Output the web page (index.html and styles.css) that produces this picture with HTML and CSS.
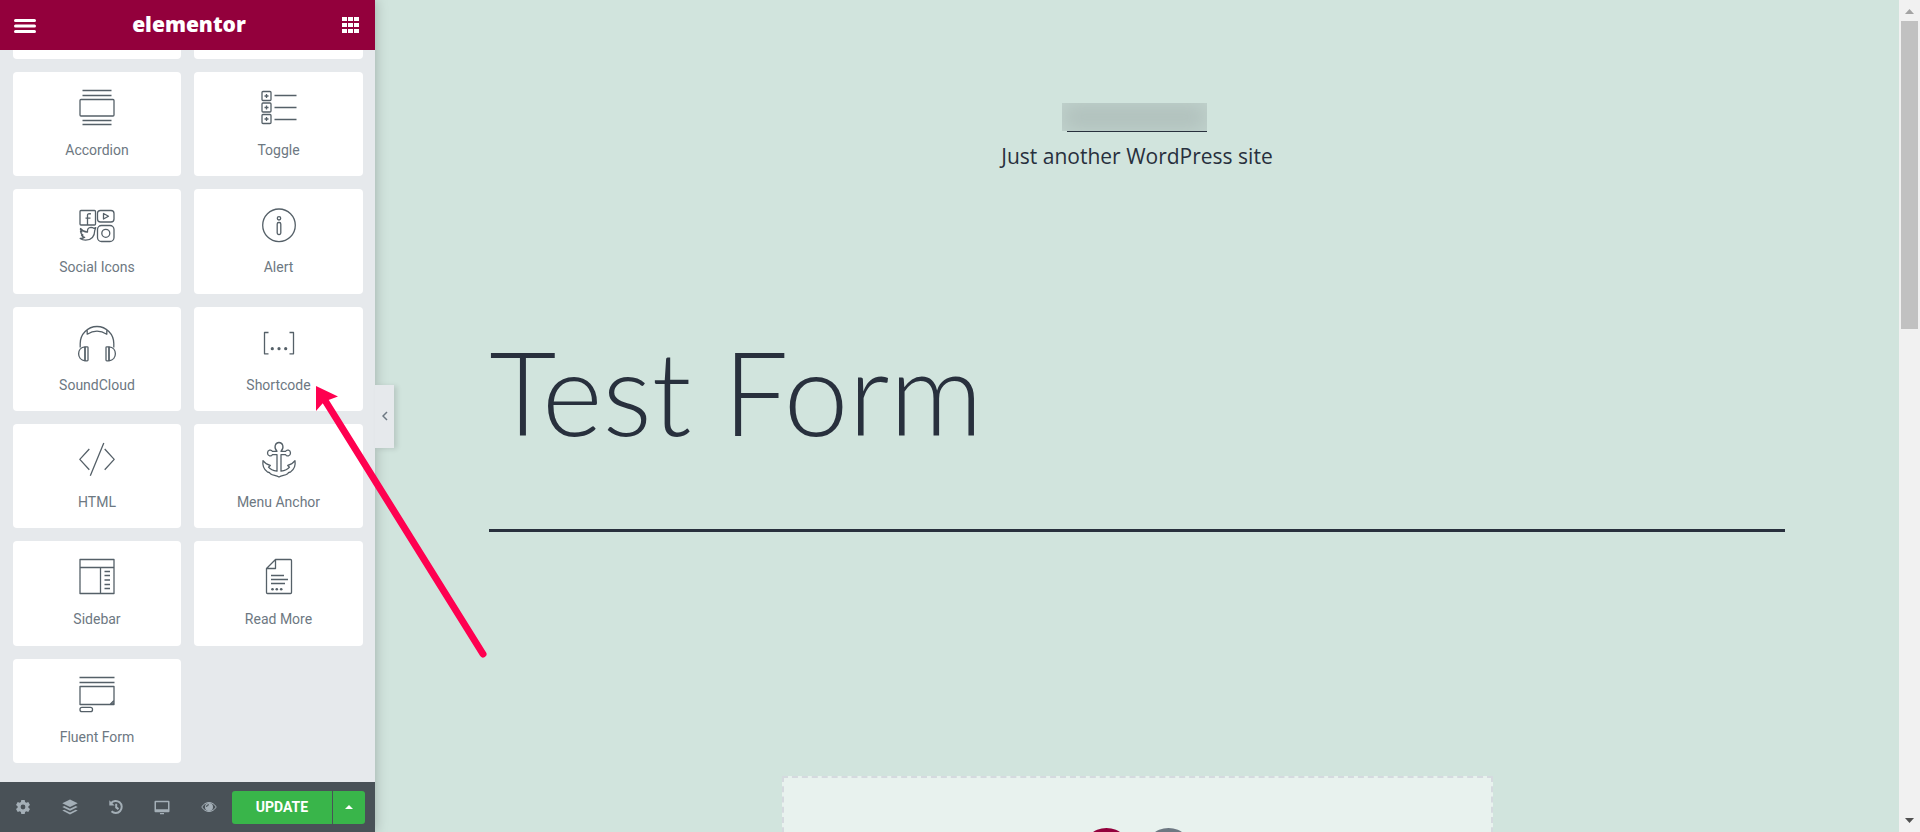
FILE: index.html
```html
<!DOCTYPE html>
<html lang="en">
<head>
<meta charset="utf-8">
<meta name="viewport" content="width=device-width, initial-scale=1">
<title>Elementor | Test Form</title>
<link rel="stylesheet" href="styles.css">
</head>
<body>
<div class="editor">
  <aside class="panel">
    <header class="panel-header">
      <button class="header-btn" type="button" aria-label="Menu">
        <svg width="22" height="18" viewBox="0 0 22 18"><path d="M1.500 4.500h19M1.500 10h19M1.500 15.500h19" stroke="#fff" stroke-width="3" stroke-linecap="round"/></svg>
      </button>
      <span class="logo">elementor</span>
      <button class="header-btn" type="button" aria-label="Widgets panel">
        <svg width="17" height="17" viewBox="0 0 17 17" fill="#fff"><path d="M0 0h5v4H0zM6 0h5v4H6zM12 0h5v4h-5zM0 6h5v4H0zM6 6h5v4H6zM12 6h5v4h-5zM0 12h5v4H0zM6 12h5v4H6zM12 12h5v4h-5z"/></svg>
      </button>
    </header>

    <div class="widgets">
      <div class="widget-edge"></div>
      <div class="widget-edge"></div>
      <button class="widget" type="button">
        <svg class="icon" viewBox="0 0 40 40"><path d="M5.500 2.500h29M5.500 7.500h29M5.500 32.500h29M5.500 36.500h29"/><rect x="3" y="11.500" width="34" height="16.500" rx="1"/></svg>
        <span>Accordion</span>
      </button>
      <button class="widget" type="button">
        <svg class="icon" viewBox="0 0 40 40"><rect x="3" y="3.500" width="9" height="9" rx="1"/><rect x="3" y="15" width="9" height="9" rx="1"/><rect x="3" y="26.500" width="9" height="9" rx="1"/><path d="M7.500 6v4M5.500 8h4M7.500 17.500v4M5.500 19.500h4M7.500 29v4M5.500 31h4M15.500 7.500h22M15.500 19.500h22M15.500 31.500h22"/></svg>
        <span>Toggle</span>
      </button>
      <button class="widget" type="button">
        <svg class="icon" viewBox="0 0 40 40"><rect x="3" y="5.500" width="15.500" height="14.500" rx="1"/><path d="M10.500 20v-10q0-1.500 3.500-1.200M8.500 13.200h5"/><rect x="20.500" y="5.500" width="16.500" height="11.500" rx="3"/><path d="M26.500 8.500v5.500l5-2.800z"/><rect x="20.500" y="20.500" width="16.500" height="16" rx="4"/><circle cx="28.800" cy="28.300" r="4"/><path d="M3.500 23.500q3 3.800 7 3.500q-.5-4.500 3.500-4.700q1.600 0 2.800 1l2-.7-1 2.600q-.3 9.800-9.300 10q-3 0-5.300-1.700 2.800.2 4.500-1.200-2.500-.3-3.200-2.300h1.500q-2.300-1.200-2.500-3.500l1.300.3q-2-1.500-1.300-3.300z"/></svg>
        <span>Social Icons</span>
      </button>
      <button class="widget" type="button">
        <svg class="icon" viewBox="0 0 40 40"><circle cx="20" cy="20.300" r="16.300"/><circle cx="20" cy="13.300" r="1.700"/><rect x="18.200" y="17.500" width="3.600" height="12" rx="1.500"/></svg>
        <span>Alert</span>
      </button>
      <button class="widget" type="button">
        <svg class="icon" viewBox="0 0 40 40"><path d="M3.200 24.500v-4a16.800 17 0 0 1 33.600 0v4M10.200 6.700v4.500q9.800-6 19.600 0V6.700M8 23.800v14C-.500 37 -.500 24.500 8 23.800zM32 23.800v14c8.500-.8 8.500-13.300 0-14z"/><rect x="8" y="23.800" width="3" height="14" rx=".8"/><rect x="29" y="23.800" width="3" height="14" rx=".8"/></svg>
        <span>SoundCloud</span>
      </button>
      <button class="widget" type="button">
        <svg class="icon" viewBox="0 0 40 40"><path d="M9.500 9.500h-4v21.300h4M30.500 9.500h4v21.300h-4"/><g class="dots"><circle cx="13.300" cy="25.700" r="1.600"/><circle cx="20" cy="25.700" r="1.600"/><circle cx="26.700" cy="25.700" r="1.600"/></g></svg>
        <span>Shortcode</span>
      </button>
      <button class="widget" type="button">
        <svg class="icon" viewBox="0 0 40 40"><path d="M12.300 9l-9.500 10.400 9.500 10.400M27.700 9l9.500 10.400-9.500 10.400M26.800 3L13.300 35.800"/></svg>
        <span>HTML</span>
      </button>
      <button class="widget" type="button">
        <svg class="icon" viewBox="0 0 40 40"><path d="M18 11.300C14.500 8 16 2.500 20 2.500s5.500 5.500 2 8.800h4.700c1-2 4.800-1.500 4.800 1.700s-3.800 3.700-4.800 1.700H22v16.500c3.500-.5 6.500-1.500 8.500-4l-1.800-1.700q4.500-1 7.300-4.800c.8 5.500-1.500 9.300-4.500 11.300q-2.200.3-3.200 2C26 35.500 23 35.300 20 37c-3-1.700-6-1.500-8.300-3q-1-1.700-3.200-2C5.500 30 3.200 26.200 4 20.700q2.800 3.800 7.300 4.800l-1.800 1.700c2 2.500 5 3.500 8.500 4V14.700h-4.700c-1 2-4.800 1.500-4.800-1.700s3.800-3.700 4.800-1.700z"/></svg>
        <span>Menu Anchor</span>
      </button>
      <button class="widget" type="button">
        <svg class="icon" viewBox="0 0 40 40"><path d="M3 2.500h34v34H3zM3 10.500h34M23.500 10.500v26M27.500 14.500h5.500M27.500 18.500h5.500M27.500 23h5.500M27.500 27.500h5.500M27.500 31.500h5.500"/></svg>
        <span>Sidebar</span>
      </button>
      <button class="widget" type="button">
        <svg class="icon" viewBox="0 0 40 40"><path d="M16.500 2.500H31.500a1 1 0 0 1 1 1v32a1 1 0 0 1-1 1h-23a1 1 0 0 1-1-1V11.500zv9h-9M12 18.500h13M12 22.500h17M12 26.500h14"/><g class="dots"><circle cx="13.500" cy="32.300" r="1.300"/><circle cx="17.800" cy="32.300" r="1.300"/><circle cx="22.200" cy="32.300" r="1.300"/></g></svg>
        <span>Read More</span>
      </button>
      <button class="widget" type="button">
        <svg class="icon" viewBox="0 0 40 40"><path d="M2.500 2.500h35M2.500 7.500h35M3 11.500h34v18H3zM37 25.500l-4 4M37 27.800l-2 1.700"/><rect x="3" y="32.300" width="12.500" height="4.400" rx="2"/></svg>
        <span>Fluent Form</span>
      </button>
    </div>

    <footer class="panel-footer">
      <div class="tools">
        <button class="tool" type="button" aria-label="Settings">
          <svg width="16" height="16" viewBox="0 0 16 16"><path fill-rule="evenodd" d="M6.300 1h3.400l.4 2 1.200.7 2-.7 1.700 2.900-1.600 1.400v1.400l1.600 1.400-1.700 2.900-2-.7-1.200.7-.4 2H6.300l-.4-2-1.200-.7-2 .7L1 10.100l1.600-1.400V7.300L1 5.900 2.700 3l2 .7L5.900 3zM8 5.600a2.400 2.400 0 1 0 0 4.800 2.400 2.400 0 0 0 0-4.800z"/></svg>
        </button>
        <button class="tool" type="button" aria-label="Navigator">
          <svg width="16" height="16" viewBox="0 0 16 16"><path d="M8 .5l7.700 3.700L8 8 .3 4.200zM.3 7.900l2-.9L8 9.800 13.700 7l2 .9L8 11.700zM.3 11.600l2-.9L8 13.500l5.700-2.800 2 .9L8 15.400z"/></svg>
        </button>
        <button class="tool" type="button" aria-label="History">
          <svg width="16" height="16" viewBox="0 0 16 16"><path class="line" d="M3 4.200A6 6 0 1 1 3.500 12.200M8.200 4.800v3.600l2.300 1.700"/><path d="M1.300 1.200v5.400h5.400z"/></svg>
        </button>
        <button class="tool" type="button" aria-label="Responsive mode">
          <svg width="16" height="16" viewBox="0 0 16 16"><path fill-rule="evenodd" d="M1.500 1.800h13a1 1 0 0 1 1 1v9.400a1 1 0 0 1-1 1h-13a1 1 0 0 1-1-1V2.800a1 1 0 0 1 1-1zM2 3.300v6.900h12V3.300zM6 14h4v1.200H6z"/></svg>
        </button>
        <button class="tool" type="button" aria-label="Preview changes">
          <svg width="16" height="16" viewBox="0 0 16 16"><path class="thin" d="M.8 8C4.200 2 11.800 2 15.200 8 11.800 14 4.200 14 .8 8z"/><path d="M8 4a4 4 0 1 0 0 8 4 4 0 0 0 0-8zM8 5.200v1A1.900 1.900 0 0 0 6.100 8h-1A2.900 2.900 0 0 1 8 5.200z" fill-rule="evenodd"/></svg>
        </button>
      </div>
      <div class="publish">
        <button class="update" type="button">UPDATE</button>
        <button class="update-more" type="button" aria-label="Save options">
          <svg width="8" height="4" viewBox="0 0 8 4"><path d="M0 4l4-4 4 4z" fill="#fff"/></svg>
        </button>
      </div>
    </footer>

    <button class="collapse" type="button" aria-label="Hide panel">
      <svg width="6" height="10" viewBox="0 0 6 10"><path d="M5 1L1 5l4 4" fill="none" stroke="#6d7882" stroke-width="1.500"/></svg>
    </button>
  </aside>

  <main class="canvas">
    <header class="branding">
      <a class="site-name" href="#" aria-label="Site home"></a>
      <p class="tagline">Just another WordPress site</p>
    </header>
    <div class="entry">
      <h1 class="title">Test Form</h1>
    </div>
    <section class="add-section">
      <button class="add add-new" type="button" aria-label="Add new section"></button>
      <button class="add add-template" type="button" aria-label="Add template"></button>
    </section>
  </main>

  <div class="scrollbar">
    <svg width="9" height="5" viewBox="0 0 9 5"><path d="M0 5l4.500-5L9 5z" fill="#a3a3a3"/></svg>
    <div class="track"><div class="thumb"></div></div>
    <svg width="9" height="5" viewBox="0 0 9 5"><path d="M0 0l4.500 5L9 0z" fill="#505050"/></svg>
  </div>

  <svg class="pointer" width="175" height="276" viewBox="0 0 175 276"><path d="M10 16L167 268" stroke="#ff0050" stroke-width="7" stroke-linecap="round"/><path d="M0 0l22 10.500-9.500 3.500-6 3.500L0 25z" fill="#ff0050"/></svg>
</div>
</body>
</html>
```

FILE: styles.css
```css
* {
  box-sizing: border-box;
}

body {
  margin: 0;
  font-family: Roboto, "Liberation Sans", sans-serif;
}

button {
  display: flex;
  align-items: center;
  justify-content: center;
  margin: 0;
  padding: 0;
  border: 0;
  background: none;
  font: inherit;
  cursor: pointer;
}

.editor {
  position: relative;
  display: flex;
  height: 100vh;
  overflow: hidden;
}

/* Left panel */

.panel {
  position: relative;
  z-index: 1;
  display: flex;
  flex: none;
  flex-direction: column;
  width: 375px;
  background: #e6e9ec;
  box-shadow: 0 0 12px rgba(0, 0, 0, 0.25);
}

.panel-header {
  display: flex;
  flex: none;
  align-items: center;
  justify-content: space-between;
  height: 50px;
  padding: 0 16px 0 14px;
  background: #93003c;
}

.logo {
  padding-bottom: 3px;
  color: #fff;
  font: 800 21px/24px "Open Sans", sans-serif;
}

.widgets {
  display: grid;
  flex: 1;
  grid-template-rows: 9px repeat(6, 1fr);
  grid-template-columns: 168px 1fr;
  gap: 13px;
  min-height: 0;
  padding: 0 12px 19px 13px;
}

.widget-edge {
  border-radius: 0 0 4px 4px;
  background: #fff;
}

.widget {
  flex-direction: column;
  gap: 13px;
  padding-bottom: 1px;
  border-radius: 4px;
  background: #fff;
  color: #6d7882;
  font-size: 14px;
  line-height: 18px;
}

.icon {
  width: 40px;
  height: 40px;
  fill: none;
  stroke: #556068;
  stroke-width: 1.3;
  stroke-linejoin: round;
}

.icon .dots {
  fill: #556068;
  stroke: none;
}

.panel-footer {
  display: flex;
  flex: none;
  align-items: center;
  height: 50px;
  padding-right: 10px;
  background: #495157;
}

.tools {
  display: grid;
  flex: 1;
  grid-template-columns: repeat(5, 1fr);
}

.tool {
  height: 48px;
  fill: #a4afb7;
}

.tool .line,
.tool .thin {
  fill: none;
  stroke: #a4afb7;
  stroke-width: 2;
}

.tool .thin {
  stroke-width: 1;
}

.publish {
  display: flex;
  gap: 1px;
}

.update,
.update-more {
  height: 33px;
  background: #39b54a;
}

.update {
  width: 100px;
  border-radius: 3px 0 0 3px;
  color: #fff;
  font-size: 14px;
  font-weight: 700;
}

.update-more {
  width: 32px;
  border-radius: 0 3px 3px 0;
}

.collapse {
  position: absolute;
  top: 385px;
  left: 100%;
  width: 19px;
  height: 63px;
  padding-bottom: 2px;
  background: #e6e9ec;
  box-shadow: 3px 1px 5px rgba(0, 0, 0, 0.12);
}

/* Page preview */

.canvas {
  display: flex;
  flex: 1;
  flex-direction: column;
  align-items: center;
  min-width: 0;
  padding-top: 103px;
  background: #d1e4dd;
  color: #28303d;
  font-family: "Open Sans", "Noto Sans", sans-serif;
}

.branding {
  display: flex;
  flex-direction: column;
  align-items: center;
}

.site-name {
  position: relative;
  width: 140px;
  height: 29px;
  border-bottom: 1px solid #28303d;
}

.site-name::before {
  position: absolute;
  inset: 0 0 0 -5px;
  background: #b1c1bd;
  box-shadow: inset 0 0 20px #c3d5cf;
  content: "";
}

.tagline {
  margin: 8px 0 0;
  font-size: 21px;
  line-height: 32px;
}

.entry {
  position: relative;
  width: 85%;
  margin-top: 140px;
  padding-bottom: 57px;
  border-bottom: 3px solid #28303d;
}

.entry::before {
  position: absolute;
  bottom: -28px;
  left: -26px;
  width: 20px;
  height: 60px;
  background: radial-gradient(closest-side at 100% 50%, rgba(0, 40, 20, 0.04), transparent);
  content: "";
}

.title {
  margin: 0;
  font-family: Lato, "Open Sans", sans-serif;
  font-size: 116px;
  font-weight: 300;
  line-height: 160px;
}

.add-section {
  display: flex;
  flex: none;
  gap: 13px;
  justify-content: center;
  width: 711px;
  max-width: 90%;
  height: 180px;
  margin-top: 244px;
  padding-top: 50px;
  border: 2px dashed #d5dadf;
  background: rgba(255, 255, 255, 0.5);
}

.add {
  width: 49px;
  height: 49px;
  border-radius: 50%;
}

.add-new {
  background: #93003c;
}

.add-template {
  background: #6d7882;
}

.scrollbar {
  display: flex;
  flex: none;
  flex-direction: column;
  align-items: center;
  width: 21px;
  padding: 9px 0;
  background: #f1f1f1;
}

.track {
  flex: 1;
  width: 17px;
  padding: 7px 0;
}

.thumb {
  height: 39%;
  background: #c1c1c1;
}

/* Arrow annotation laid over the editor */

.pointer {
  position: absolute;
  z-index: 2;
  top: 386px;
  left: 316px;
  pointer-events: none;
}
```
